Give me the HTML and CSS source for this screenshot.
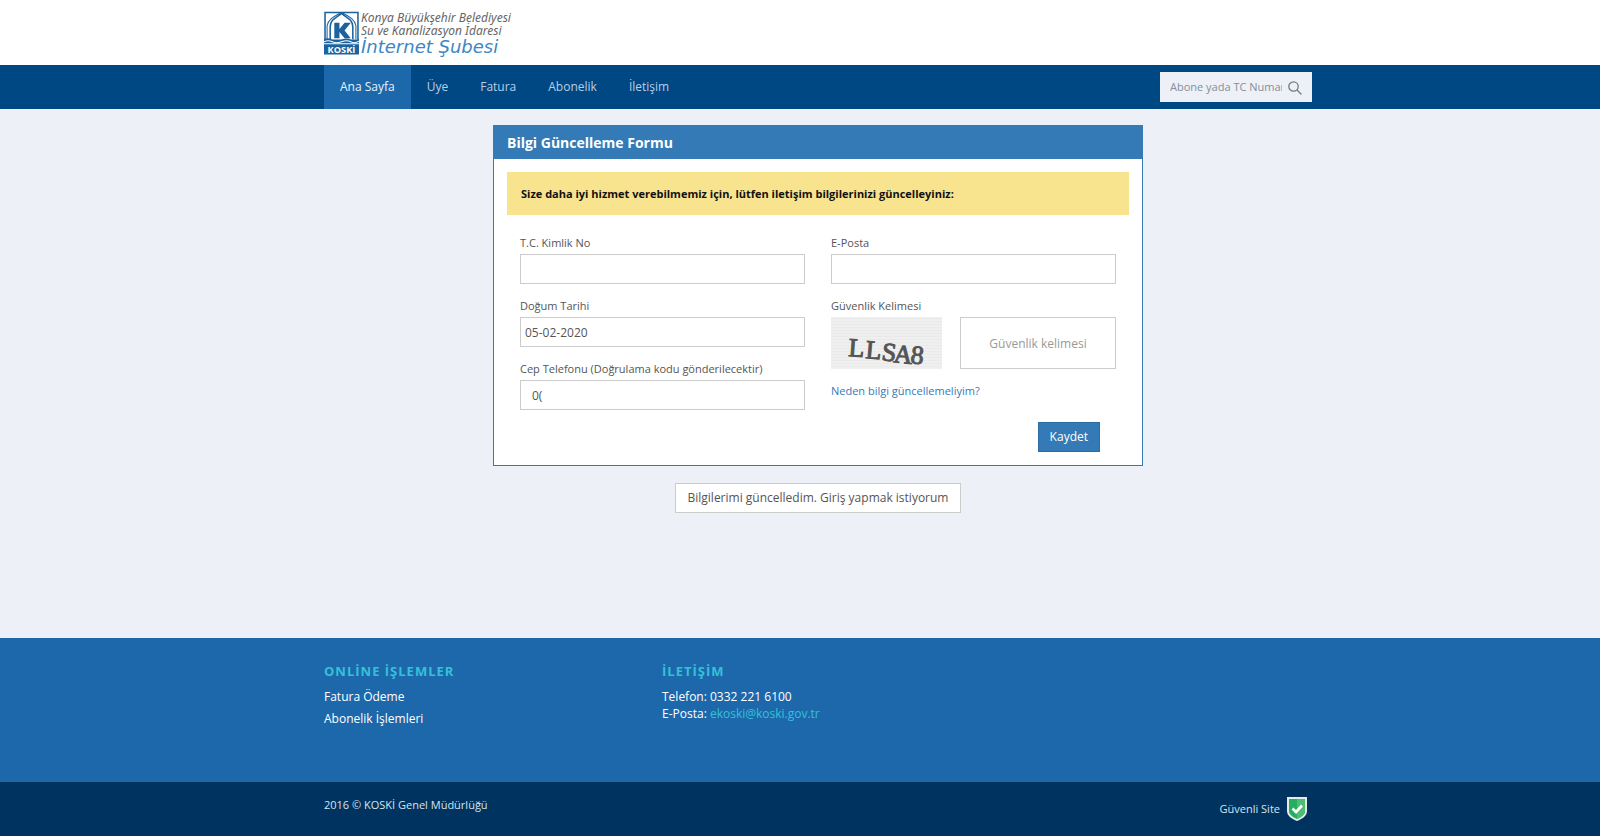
FILE: index.html
```html
<!DOCTYPE html>
<html lang="tr">
<head>
<meta charset="utf-8">
<title>KOSKİ İnternet Şubesi</title>
<link rel="stylesheet" href="styles.css">
</head>
<body>
<header class="top">
  <div class="container">
    <a class="brand" href="#">
      <svg class="brand-mark" viewBox="0 0 34 42" aria-hidden="true">
        <path d="M1 1H33V28H1Z" fill="#fff" stroke="#1b629f" stroke-width="1.500"/>
        <path d="M6 27V15C6 8 12 6 17 2C22 6 28 8 28 15V27" fill="none" stroke="#1b629f" stroke-width="1.500"/>
        <path d="M3 27V14C4 7 12 4 17 1C22 4 30 7 31 14V27" fill="none" stroke="#1b629f" stroke-width="1"/>
        <path d="M10 11H15V17L20 11H26L20 18.500L26 26H20L15 20V26H10Z" fill="#1b629f"/>
        <path d="M0 27Q4 25 8 27.500T17 27.500T26 27.500T34 27V42H0Z" fill="#1b629f"/>
        <path d="M0 29.500Q4 27.500 8 29.500T17 29.500T26 29.500T34 29" fill="none" stroke="#fff" stroke-width="1"/>
        <path d="M0 31.500H34" fill="none" stroke="#fff" stroke-width="1"/>
        <text x="17" y="40" text-anchor="middle" class="brand-code">KOSKİ</text>
      </svg>
      <span class="brand-text">
        <span class="brand-line">Konya Büyükşehir Belediyesi</span>
        <span class="brand-line">Su ve Kanalizasyon İdaresi</span>
        <span class="brand-title">İnternet Şubesi</span>
      </span>
    </a>
  </div>
</header>
<nav class="nav">
  <div class="container nav-row">
    <div class="nav-links">
      <a class="nav-link active" href="#">Ana Sayfa</a>
      <a class="nav-link" href="#">Üye</a>
      <a class="nav-link" href="#">Fatura</a>
      <a class="nav-link" href="#">Abonelik</a>
      <a class="nav-link" href="#">İletişim</a>
    </div>
    <form class="search">
      <input class="search-input" type="text" placeholder="Abone yada TC Numarası" aria-label="Abone yada TC Numarası">
      <button class="search-button" type="button" aria-label="Ara">
        <svg viewBox="0 0 14 14" width="14" height="14" fill="none" stroke="#6f7a88" stroke-width="1.300"><circle cx="5.500" cy="5.500" r="4.700"/><path d="M9 9L13.500 13.500"/></svg>
      </button>
    </form>
  </div>
</nav>
<main class="main">
  <section class="panel">
    <h1 class="panel-title">Bilgi Güncelleme Formu</h1>
    <form class="panel-body">
      <p class="notice">Size daha iyi hizmet verebilmemiz için, lütfen iletişim bilgilerinizi güncelleyiniz:</p>
      <div class="columns">
        <div class="column">
          <div class="field"><label for="tc">T.C. Kimlik No</label><input class="control" id="tc" type="text"></div>
          <div class="field"><label for="birth">Doğum Tarihi</label><input class="control" id="birth" type="text" value="05-02-2020"></div>
          <div class="field"><label for="phone">Cep Telefonu (Doğrulama kodu gönderilecektir)</label><input class="control phone" id="phone" type="text" value="0("></div>
        </div>
        <div class="column">
          <div class="field"><label for="mail">E-Posta</label><input class="control" id="mail" type="email"></div>
          <div class="field">
            <label for="captcha">Güvenlik Kelimesi</label>
            <div class="captcha-row">
              <svg class="captcha" viewBox="0 0 111 52" role="img" aria-label="LLSA8">
                <defs><pattern id="grain" width="4" height="3" patternUnits="userSpaceOnUse"><path d="M0 1L2 2L4 1" fill="none" stroke="#e8e8e8"/></pattern></defs>
                <rect width="111" height="52" fill="#f0f0f0"/><rect width="111" height="52" fill="url(#grain)"/>
                <g class="captcha-glyphs">
                  <text transform="translate(17 39) rotate(4)">L</text>
                  <text transform="translate(34 41) rotate(5)">L</text>
                  <text transform="translate(50 43) rotate(7)">S</text>
                  <text transform="translate(62 45) rotate(6)">A</text>
                  <text transform="translate(79 46) rotate(6)">8</text>
                </g>
              </svg>
              <input class="control captcha-input" id="captcha" type="text" placeholder="Güvenlik kelimesi">
            </div>
          </div>
          <a class="why" href="#">Neden bilgi güncellemeliyim?</a>
        </div>
      </div>
      <div class="actions"><button class="save" type="button">Kaydet</button></div>
    </form>
  </section>
  <button class="login" type="button">Bilgilerimi güncelledim. Giriş yapmak istiyorum</button>
</main>
<footer>
  <div class="footer-main">
    <div class="container footer-grid">
      <div>
        <h2>ONLİNE İŞLEMLER</h2>
        <a class="footer-link" href="#">Fatura Ödeme</a>
        <a class="footer-link" href="#">Abonelik İşlemleri</a>
      </div>
      <address>
        <h2>İLETİŞİM</h2>
        <div>Telefon: 0332 221 6100</div>
        <div>E-Posta: <a class="mail" href="#">ekoski@koski.gov.tr</a></div>
      </address>
    </div>
  </div>
  <div class="footer-bottom">
    <div class="container legal">
      <span>2016 © KOSKİ Genel Müdürlüğü</span>
      <span class="secure">Güvenli Site
        <svg viewBox="0 0 22 26" width="22" height="26" aria-hidden="true"><path d="M1 1H21V15C21 20 16 23 11 25C6 23 1 20 1 15Z" fill="#e6ede9"/><path d="M3 3H19V15C19 19 15 21 11 23C7 21 3 19 3 15Z" fill="#25ae60"/><path d="M11 3H19V15C19 19 15 21 11 23Z" fill="#4dbd72"/><path d="M6.500 12.500L10 16L16 9.500" fill="none" stroke="#fff" stroke-width="2.600"/></svg>
      </span>
    </div>
  </div>
</footer>
</body>
</html>
```
FILE: styles.css
```css
* { box-sizing: border-box; }
body {
  margin: 0;
  min-height: 100vh;
  display: flex;
  flex-direction: column;
  background: #edf1f7;
  color: #555;
  font: 12px/18px "Open Sans", "Noto Sans", sans-serif;
}
a { text-decoration: none; color: inherit; }
button, input { font: inherit; color: inherit; border-radius: 0; }
.top, .nav, .main, .footer-main, .footer-bottom { padding-left: 36px; }
.container { width: 100%; max-width: 988px; margin: 0 auto; }
.top { background: #fff; height: 65px; }
.brand { display: inline-flex; gap: 2px; padding-top: 11px; }
.brand-mark { width: 35px; height: 44px; }
.brand-code { font: bold 9px "Open Sans", sans-serif; fill: #fff; }
.brand-text { display: flex; flex-direction: column; font-family: "Noto Sans", sans-serif; font-style: italic; white-space: nowrap; }
.brand-line { font-size: 12px; line-height: 13px; color: #666; }
.brand-title { font-family: "DejaVu Sans", sans-serif; font-size: 18px; line-height: 20px; color: #3c87c3; }
.nav { background: #004884; }
.nav-row { display: flex; justify-content: space-between; align-items: center; }
.nav-links { display: flex; }
.nav-link { padding: 0 16px; line-height: 44px; color: #b4cfe6; }
.nav-link.active { background: #1d68ab; color: #e6f3fb; }
.search { display: flex; align-items: center; width: 152px; height: 30px; padding: 0 10px; gap: 6px; background: #edf1f7; }
.search-input { flex: 1; min-width: 0; padding: 0; border: 0; background: none; font-size: 11px; outline: 0; }
.search-input::placeholder { color: #858e99; opacity: 1; }
.search-button { display: flex; padding: 2px 0 0; border: 0; background: none; }
.main { flex: 1; display: flex; flex-direction: column; align-items: center; padding-top: 16px; }
.panel { width: 100%; max-width: 650px; border: 1px solid #337ab7; background: #fff; }
.panel-title { margin: 0; padding: 0 13px; font-size: 14px; line-height: 33px; color: #fff; background: #337ab7; }
.panel-body { padding: 13px; }
.notice { margin: 0 0 20px; padding: 0 14px; font-size: 11px; font-weight: bold; line-height: 43px; color: #111; background: #f8e38f; }
.columns { display: grid; grid-template-columns: 1fr 1fr; gap: 26px; padding: 0 13px; }
.column { display: flex; flex-direction: column; gap: 14px; }
.field { display: flex; flex-direction: column; gap: 4px; }
.field label, .why { font-size: 11px; line-height: 15px; }
.control { width: 100%; height: 30px; padding: 0 4px; border: 1px solid #ccc; background: #fff; }
.control.phone { padding-left: 11px; }
.captcha-row { display: flex; justify-content: space-between; }
.captcha { width: 111px; height: 52px; }
.captcha-glyphs { font: 26px "Liberation Serif", serif; fill: #555; stroke: #555; }
.control.captcha-input { width: 156px; height: 52px; text-align: center; }
.captcha-input::placeholder { color: #999; opacity: 1; }
.why { color: #337ab7; }
.actions { display: flex; justify-content: flex-end; padding: 12px 29px 0; }
.save { height: 30px; padding: 0 11px; border: 1px solid #2e6da4; background: #337ab7; color: #fff; }
.login { height: 30px; margin: 17px 0; padding: 0 12px; border: 1px solid #ccc; background: #fff; }
.footer-main { min-height: 144px; padding-top: 24px; background: #1d68ab; color: #fff; }
.footer-grid { display: grid; grid-template-columns: 338px 1fr; }
.footer-main h2 { margin: 0 0 8px; font-size: 13px; line-height: 18px; letter-spacing: 1px; color: #34c1d8; }
.footer-link { display: block; margin-bottom: 4px; }
address { font-style: normal; line-height: 17px; }
.mail { color: #34c1d8; }
.footer-bottom { height: 54px; background: #00335f; color: #d6e4ef; font-size: 11px; }
.legal { display: flex; justify-content: space-between; padding-top: 14px; }
.secure { display: flex; align-items: center; gap: 6px; padding-right: 4px; }
```
